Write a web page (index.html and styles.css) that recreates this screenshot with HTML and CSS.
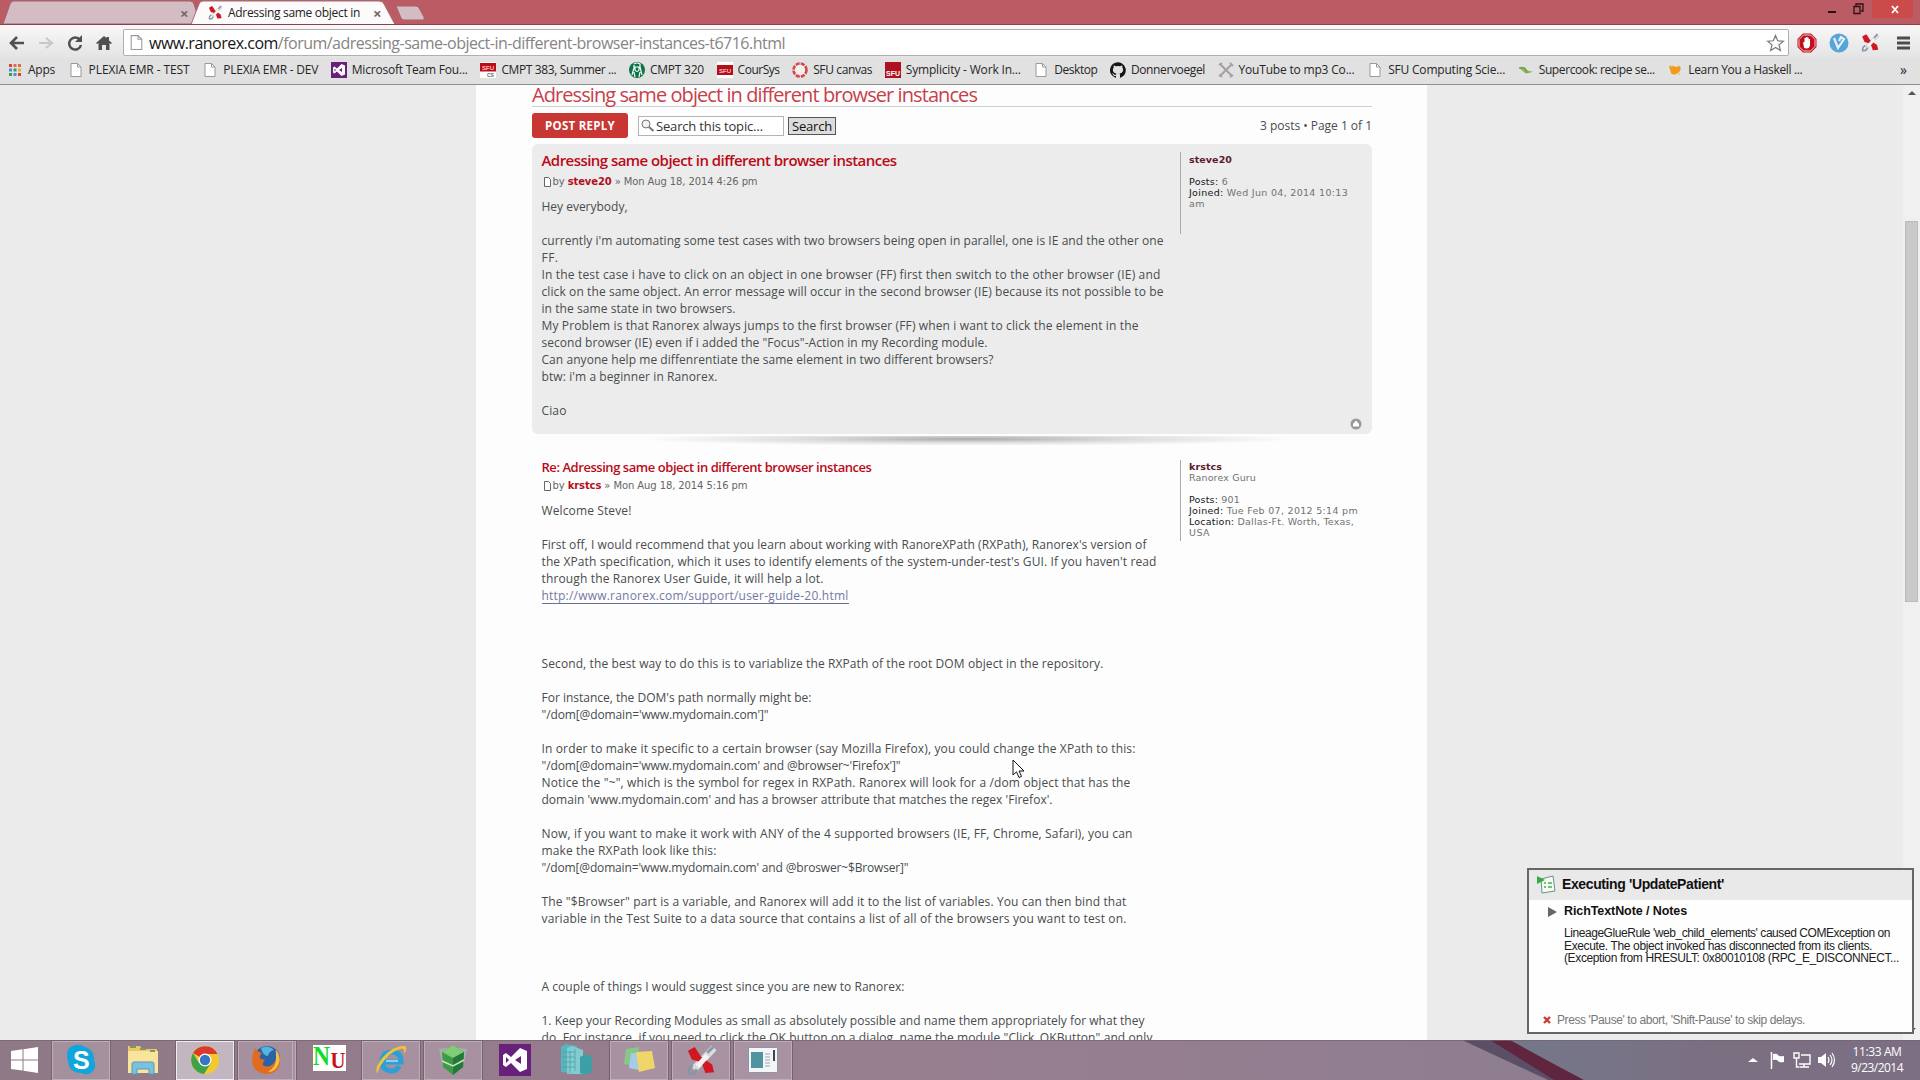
FILE: index.html
```html
<!DOCTYPE html>
<html lang="en">
<head>
<meta charset="utf-8">
<title>Adressing same object in different browser instances</title>
<link rel="stylesheet" href="styles.css">
</head>
<body>
<svg class="defs" width="0" height="0">
  <symbol id="page" viewBox="0 0 16 16"><path d="M3 1.5h6.5l3.5 3.5v9.500H3z" fill="#fff" stroke="#999"/><path d="M9.500 1.500V5H13" fill="none" stroke="#999"/></symbol>
  <symbol id="ranorex" viewBox="0 0 16 16"><path d="M14.500 1.500 4 12.500" stroke="#d9dcdf" stroke-width="3.600"/><path d="M3.500 10.500Q.8 12 1.500 14.800 4.500 15.500 5.500 12.500M11 4l3-3" fill="none" stroke="#8497a8" stroke-width="1.400"/><path d="M1 3 4.500 1l3.300 5L13.500 10l1 4-4.500.5-2-5.500L3 7.500z" fill="#d01820"/><path d="m6 11 5-5.500" stroke="#f4f4f4" stroke-width="2.600"/></symbol>
  <symbol id="vs" viewBox="0 0 32 32"><path fill="#68217a" d="M0 0h32v32H0z"/><path fill="#fff" fill-rule="evenodd" d="M21 4l7 3v18l-7 3-9-9-5 4-3-2V11l3-2 5 4zm1 8-6 4 6 4zM7 13v6l3-3z"/></symbol>
</svg>

<header class="browser">
  <div class="tabstrip">
    <svg class="tabshapes" width="440" height="24" viewBox="0 0 440 24"><path d="M3 24 10 4q1-3 4-3h176q3 0 4 3l6 20z" fill="#d4bcc4" stroke="#9d6470"/><path d="M191 24.500 199 4q1-3 4-3h176q4 0 5 3l11 20.500z" fill="#fcfafa" stroke="#a36e76"/><path d="M396 6h20q2 0 3 2l5 9q1 3-1 3h-19q-2 0-3-2z" fill="#d3bdc2" stroke="#a8606c"/></svg>
    <div class="tab first"><b class="x">×</b></div>
    <div class="tab second"><svg width="15" height="15"><use href="#ranorex"/></svg><span data-w="132">Adressing same object in</span><b class="x">×</b></div>
    <div class="winbtns"><svg width="100" height="20" viewBox="0 0 100 20"><path d="M52 0h41v18H52z" fill="#cb4b4b"/><path d="M8 12h8" stroke="#2a1216" stroke-width="2"/><path d="M34 6.500h6v7h-6zM36 6V4h7v7h-2" fill="none" stroke="#2a1216" stroke-width="1.300"/><path d="m72 6 6 7m0-7-6 7" stroke="#fff" stroke-width="1.800"/></svg></div>
  </div>
  <div class="toolbar">
    <div class="nav">
      <svg width="18" height="18" viewBox="0 0 18 18"><path d="M16 9H3m6-6L3 9l6 6" fill="none" stroke="#505050" stroke-width="2.600"/></svg>
      <svg width="18" height="18" viewBox="0 0 18 18"><path d="M2 9h13M9 4l6 5-6 5" fill="none" stroke="#c8c8c8" stroke-width="2"/></svg>
      <svg width="18" height="18" viewBox="0 0 18 18"><path d="M14 6A6 6 0 1 0 15 11" fill="none" stroke="#505050" stroke-width="2.500"/><path d="M16 1v7H9z" fill="#505050"/></svg>
      <svg width="18" height="18" viewBox="0 0 18 18"><path d="M1 9 9 2l2.500 2V3H14v3.500L17 9l-1 1-1.500-1v7H11v-5H7v5H3.500V9L2 10z" fill="#505050"/></svg>
    </div>
    <div class="omnibox">
      <svg width="17" height="17"><use href="#page"/></svg>
      <span class="url" data-w="636">www.ranorex.com<i>/forum/adressing-same-object-in-different-browser-instances-t6716.html</i></span>
      <svg class="star" width="19" height="18" viewBox="0 0 18 18"><path d="m9 1.500 2.200 5.300 5.600.4-4.300 3.700 1.400 5.500L9 13.400l-4.900 3 1.400-5.500L1.200 7.200l5.600-.4z" fill="#fff" stroke="#777" stroke-width="1.200"/></svg>
    </div>
    <div class="exts">
      <svg width="20" height="20" viewBox="0 0 20 20"><path d="M6 .5h8L19.500 6v8L14 19.500H6L.5 14V6z" fill="#c01020"/><path d="M6.500 2h7L18 6.500v7L13.500 18h-7L2 13.500v-7z" fill="none" stroke="#f3c9cc"/><path d="M6 9.500 7.500 9V5h1.300v3.500V4h1.400v4.500V4.500h1.400V9l.2-3h1.200v6q-.5 3.500-3.500 3.500T6.800 13z" fill="#fff"/></svg>
      <svg width="20" height="20" viewBox="0 0 20 20"><circle cx="10" cy="10" r="9.500" fill="#58a4d8"/><path d="m5 5 4 10 6-9-3-2-2 4" fill="none" stroke="#e5f2fa" stroke-width="2.200"/></svg>
      <svg width="19" height="19"><use href="#ranorex"/></svg>
      <svg class="menu" width="14" height="14" viewBox="0 0 14 14"><path d="M0 2h13M0 7h13M0 12h13" stroke="#4c4c4c" stroke-width="2.800"/></svg>
    </div>
  </div>
  <nav class="bookmarks">
    <a><svg width="16" height="16" viewBox="0 0 16 16"><path d="M2 2h3v3H2zM11 11h3v3h-3z" fill="#d84437"/><path d="M6.500 2h3v3h-3zM11 2h3v3h-3z" fill="#e06850"/><path d="M2 6.500h3v3H2zM6.500 11h3v3h-3z" fill="#4a8edb"/><path d="M6.500 6.500h3v3h-3zM2 11h3v3H2z" fill="#35a060"/><path d="M11 6.500h3v3h-3z" fill="#e8b020"/></svg><span data-w="27">Apps</span></a>
    <a><svg width="16" height="16"><use href="#page"/></svg><span data-w="101">PLEXIA EMR - TEST</span></a>
    <a><svg width="16" height="16"><use href="#page"/></svg><span data-w="95">PLEXIA EMR - DEV</span></a>
    <a><svg width="16" height="16"><use href="#vs"/></svg><span data-w="116">Microsoft Team Fou...</span></a>
    <a><svg width="16" height="16" viewBox="0 0 16 16"><path fill="#fff" d="M0 0h16v16H0z"/><path fill="#c00c18" d="M0 1h16v8.500H0z"/><text x="2" y="8" class="sfu">SFU</text><text x="7" y="14.500" class="cs">CS</text></svg><span data-w="115">CMPT 383, Summer ...</span></a>
    <a><svg width="16" height="16" viewBox="0 0 16 16"><circle cx="8" cy="8" r="8" fill="#0c7448"/><path d="M5 2q3-2 6 0v3l2 8M5 3v3l-2 7M6 5h4v3q-2 3-4 0zM5 10l1 5m5-5-1 5" fill="none" stroke="#fff" stroke-width="1.200"/></svg><span data-w="54">CMPT 320</span></a>
    <a><svg width="16" height="16" viewBox="0 0 16 16"><path fill="#fff" d="M0 0h16v16H0z"/><path fill="#b80c18" d="M0 3h16v10H0z"/><text x="2" y="11" class="sfu">SFU</text></svg><span data-w="42">CourSys</span></a>
    <a><svg width="16" height="16" viewBox="0 0 16 16"><circle cx="8" cy="8" r="6.500" fill="#f7eeee" stroke="#d44848" stroke-width="2.600" stroke-dasharray="4 1.100"/></svg><span data-w="59">SFU canvas</span></a>
    <a><svg width="16" height="16" viewBox="0 0 16 16"><path fill="#b01020" d="M0 0h16v16H0z"/><text x="1" y="14" class="sfu big">SFU</text></svg><span data-w="115">Symplicity - Work In...</span></a>
    <a><svg width="16" height="16"><use href="#page"/></svg><span data-w="43">Desktop</span></a>
    <a><svg width="16" height="16" viewBox="0 0 16 16"><path fill="#161616" d="M8 .2A8 8 0 0 0 5.500 15.800c.4.1.5-.2.500-.4v-1.500c-2.200.5-2.700-1-2.700-1-.4-.9-.9-1.200-.9-1.200-.7-.5.100-.5.100-.5.8.1 1.200.8 1.200.8.700 1.200 1.900.9 2.300.7.100-.5.300-.9.500-1.100-1.800-.2-3.600-.9-3.600-4 0-.9.300-1.600.8-2.100-.1-.2-.4-1 .1-2.100 0 0 .7-.2 2.200.8a7.600 7.600 0 0 1 4 0c1.500-1 2.200-.8 2.200-.8.400 1.100.2 1.900.1 2.100.5.600.8 1.300.8 2.100 0 3.100-1.900 3.800-3.700 4 .3.300.6.800.6 1.500v2.200c0 .2.100.5.600.4A8 8 0 0 0 8 .2z"/></svg><span data-w="74">Donnervoegel</span></a>
    <a><svg width="16" height="16" viewBox="0 0 16 16"><path d="m2 2 12 12M14 2 2 14M1 3l3-2m8 0 3 3M1 13l3 2m8 0 3-2" stroke="#a6a0a0" stroke-width="2" fill="none"/></svg><span data-w="116">YouTube to mp3 Co...</span></a>
    <a><svg width="16" height="16"><use href="#page"/></svg><span data-w="117">SFU Computing Scie...</span></a>
    <a><svg width="16" height="16" viewBox="0 0 16 16"><path d="M1 6q4-3 7 1 3 3 7 2-3 3-8 2" fill="#8fb860"/><path d="M1 6h6l2 5" fill="none" stroke="#6b8c48"/></svg><span data-w="116">Supercook: recipe se...</span></a>
    <a><svg width="16" height="16" viewBox="0 0 16 16"><path d="M2 4q5-1 6 1l5-1q2 4-2 7-5 3-7 0z" fill="#f39a1c"/><path d="m3 4 3 1m5 5 2 3" stroke="#d8c060"/></svg><span data-w="114">Learn You a Haskell ...</span></a>
    <span class="more">»</span>
  </nav>
</header>

<main class="viewport">
  <div class="sheet">
    <h1><span data-w="445">Adressing same object in different browser instances</span></h1>
    <div class="actions">
      <div class="reply"><span data-w="70">POST REPLY</span></div>
      <div class="searchbox"><svg width="15" height="15" viewBox="0 0 15 15"><circle cx="6" cy="6" r="4" fill="#eef2f4" stroke="#777"/><path d="m9 9 4.500 4" stroke="#777" stroke-width="2"/></svg><span data-w="107">Search this topic…</span></div>
      <div class="searchbtn"><span data-w="40">Search</span></div>
      <div class="pages"><span data-w="112">3 posts • Page 1 of 1</span></div>
    </div>
    <article class="post grey">
      <div class="body">
        <h2><span data-w="355">Adressing same object in different browser instances</span></h2>
        <div class="by"><svg width="9" height="11" viewBox="0 0 9 11"><path d="M1.500.5h4l2 2v7h-6z" fill="#fff" stroke="#666"/></svg><span data-w="205">by <b>steve20</b> » Mon Aug 18, 2014 4:26 pm</span></div>
        <div class="lines">
          <span data-w="86">Hey everybody,</span><br>
          <span data-w="622">currently i'm automating some test cases with two browsers being open in parallel, one is IE and the other one</span>
          <span data-w="17">FF.</span>
          <span data-w="619">In the test case i have to click on an object in one browser (FF) first then switch to the other browser (IE) and</span>
          <span data-w="622">click on the same object. An error message will occur in the second browser (IE) because its not possible to be</span>
          <span data-w="194">in the same state in two browsers.</span>
          <span data-w="597">My Problem is that Ranorex always jumps to the first browser (FF) when i want to click the element in the</span>
          <span data-w="446">second browser (IE) even if i added the "Focus"-Action in my Recording module.</span>
          <span data-w="452">Can anyone help me diffenrentiate the same element in two different browsers?</span>
          <span data-w="176">btw: i'm a beginner in Ranorex.</span><br>
          <span data-w="25">Ciao</span>
        </div>
      </div>
      <aside class="profile">
        <span class="user" data-w="43">steve20</span><br>
        <span data-w="39"><b>Posts:</b> 6</span>
        <span data-w="159"><b>Joined:</b> Wed Jun 04, 2014 10:13</span>
        <span data-w="16">am</span>
      </aside>
      <svg class="top" width="12" height="12" viewBox="0 0 12 12"><circle cx="6" cy="6" r="5.500" fill="#999"/><path d="m6 2.500 3 3.500v2.500H3V6z" fill="#fff"/></svg>
    </article>
    <div class="shade"></div>
    <article class="post reply2">
      <div class="body">
        <h2 class="small"><span data-w="330">Re: Adressing same object in different browser instances</span></h2>
        <div class="by"><svg width="9" height="11" viewBox="0 0 9 11"><path d="M1.500.5h4l2 2v7h-6z" fill="#fff" stroke="#666"/></svg><span data-w="195">by <b>krstcs</b> » Mon Aug 18, 2014 5:16 pm</span></div>
        <div class="lines">
          <span data-w="90">Welcome Steve!</span><br>
          <span data-w="605">First off, I would recommend that you learn about working with RanoreXPath (RXPath), Ranorex's version of</span>
          <span data-w="615">the XPath specification, which it uses to identify elements of the system-under-test's GUI. If you haven't read</span>
          <span data-w="282">through the Ranorex User Guide, it will help a lot.</span>
          <span class="link" data-w="307">http://www.ranorex.com/support/user-guide-20.html</span><br><br><br>
          <span data-w="562">Second, the best way to do this is to variablize the RXPath of the root DOM object in the repository.</span><br>
          <span data-w="270">For instance, the DOM's path normally might be:</span>
          <span data-w="227">"/dom[@domain='www.mydomain.com']"</span><br>
          <span data-w="594">In order to make it specific to a certain browser (say Mozilla Firefox), you could change the XPath to this:</span>
          <span data-w="359">"/dom[@domain='www.mydomain.com' and @browser~'Firefox']"</span>
          <span data-w="589">Notice the "~", which is the symbol for regex in RXPath. Ranorex will look for a /dom object that has the</span>
          <span data-w="511">domain 'www.mydomain.com' and has a browser attribute that matches the regex 'Firefox'.</span><br>
          <span data-w="591">Now, if you want to make it work with ANY of the 4 supported browsers (IE, FF, Chrome, Safari), you can</span>
          <span data-w="175">make the RXPath look like this:</span>
          <span data-w="367">"/dom[@domain='www.mydomain.com' and @broswer~$Browser]"</span><br>
          <span data-w="585">The "$Browser" part is a variable, and Ranorex will add it to the list of variables. You can then bind that</span>
          <span data-w="585">variable in the Test Suite to a data source that contains a list of all of the browsers you want to test on.</span><br><br><br>
          <span data-w="363">A couple of things I would suggest since you are new to Ranorex:</span><br>
          <span data-w="603">1. Keep your Recording Modules as small as absolutely possible and name them appropriately for what they</span>
          <span data-w="611">do. For instance, if you need to click the OK button on a dialog, name the module "Click_OKButton" and only</span>
        </div>
      </div>
      <aside class="profile">
        <span class="user" data-w="33">krstcs</span>
        <span data-w="67">Ranorex Guru</span><br>
        <span data-w="51"><b>Posts:</b> 901</span>
        <span data-w="169"><b>Joined:</b> Tue Feb 07, 2012 5:14 pm</span>
        <span data-w="165"><b>Location:</b> Dallas-Ft. Worth, Texas,</span>
        <span data-w="21">USA</span>
      </aside>
    </article>
  </div>
  <div class="scrollbar"><i class="up"></i><div class="thumb"></div><i class="down"></i></div>
</main>

<footer class="taskbar">
  <svg class="wall" width="1920" height="40" viewBox="0 0 1920 40"><defs><linearGradient id="wg"><stop offset="0" stop-color="#907987"/><stop offset=".45" stop-color="#987f90"/><stop offset=".78" stop-color="#8f7d90"/></linearGradient><linearGradient id="wr"><stop offset="0" stop-color="#74788a"/><stop offset=".5" stop-color="#7b6f82"/><stop offset="1" stop-color="#7d6f83"/></linearGradient></defs><path fill="url(#wg)" d="M0 0h1920v40H0z"/><path fill="url(#wr)" d="M1508 0h412v40h-336z"/><path fill="#5b4f68" d="M1462 0h40l68 40h-22z"/><path fill="#61263f" d="M1490 0h20l42 23 32 17h-30z"/><path d="M0 .5h1920" stroke="#75646f" opacity=".7"/></svg>
  <div class="start"><svg width="28" height="26" viewBox="0 0 28 26"><path fill="#fff" d="M0 4 11.500 2.300V12.500H0zM12.500 2.200 27 0v12.500H12.500zM0 13.500h11.500v10L0 22zM12.500 13.500H27V26l-14.500-2.200z"/></svg></div>
  <div class="task open"><svg width="32" height="32" viewBox="0 0 32 32"><path d="M10 1q6-1 10 2 10 3 9 13 4 10-5 14-4 1-8-1-12 0-13-12Q-1 4 10 1z" fill="#11a5de"/><text x="8" y="25" class="skype">S</text></svg></div>
  <div class="task"><svg width="34" height="32" viewBox="0 0 34 32"><path d="M2 2h12l2 3h15v24H2z" fill="#eac867"/><path d="M2 7h30v22H2z" fill="#f8e49b"/><path d="M4 3h6m4 2h6m4 2h5" stroke="#7a9a64" stroke-width="2"/><path d="M6 30V20q0-2 2-2h18q2 0 2 2v10h-5v-5H11v5z" fill="#7cc0dc" stroke="#4e9dc0"/></svg></div>
  <div class="task open active"><svg width="30" height="30" viewBox="0 0 30 30"><circle cx="15" cy="15" r="14" fill="#f5c92c"/><path d="M15 15 3 8A14 14 0 0 1 27.500 9H15z" fill="#d83a2c"/><path d="M3 8A14 14 0 0 0 14 29l7-11-6 3-6-3z" fill="#3fa14a"/><circle cx="15" cy="15" r="6.500" fill="#fff"/><circle cx="15" cy="15" r="5.200" fill="#3576c4"/></svg></div>
  <div class="task open stack"><svg width="30" height="30" viewBox="0 0 30 30"><circle cx="16" cy="14" r="13" fill="#2863a8"/><path d="M10 3q7-4 13 2-5 1-6 6-5 0-7-8z" fill="#56b5dc"/><path d="M3 6q0-2 1-3 2 4 7 5-4 4-1 6l4 1q-3 3-2 5 5 4 11-2 4-5 1-13 6 5 5 12-1 12-14 12Q2 28 1 16 1 10 3 6z" fill="#e06c22"/><path d="M25 5q5 6 3 13-3 9-11 9 8-5 8-13z" fill="#f5c04a"/></svg></div>
  <div class="task"><svg class="nu" width="33" height="26" viewBox="0 0 33 26"><path fill="#fff" d="M0 0h33v26H0z"/><text x="0" y="20" class="nu-n" textLength="17" lengthAdjust="spacingAndGlyphs">N</text><text x="17.500" y="23" class="nu-u" textLength="15" lengthAdjust="spacingAndGlyphs">U</text></svg></div>
  <div class="task open"><svg width="34" height="32" viewBox="0 0 34 32"><path d="M25 22q-2 5-8 5-9-1-9-10 1-9 10-9 9 0 9 10H9" fill="none" stroke="#2b9fd8" stroke-width="5"/><path d="M12 17h12" stroke="#80d6f4" stroke-width="2"/><path d="M4 30Q-1 26 9 13 20 1 31 2q3 2-1 8 1-7-4-5Q15 8 7 21q-4 6-3 9z" fill="#efc53b"/></svg></div>
  <div class="task open"><svg width="32" height="32" viewBox="0 0 32 32"><path d="M2 5q14-3 28 0l-3 14q-10 10-22 0z" fill="#a6bdb2" opacity=".7"/><path d="m16 1 11 7-1 15-10 8-10-8-1-15z" fill="#3d9a48"/><path d="m16 1 11 7-11 6L5 8z" fill="#82cc78"/><path d="m16 14 11-6-1 15-10 8z" fill="#257836"/><path d="m5 17 11 5 11-6" stroke="#c7e4c2" stroke-width="1.500" fill="none"/></svg></div>
  <div class="task"><svg width="32" height="32"><use href="#vs"/></svg></div>
  <div class="task"><svg width="34" height="32" viewBox="0 0 34 32"><path d="m1 3 5-3 11 2v27L1 28z" fill="#58b5bd"/><path d="m7 4 5-2 11 4v24H7z" fill="#80ccd0"/><path d="m20 13 6-3 6 3v15l-7 3-5-2z" fill="#3d9fa8"/><path d="M2 8h13M2 13h13M2 18h13M2 23h13m-5-16v22m5-24v22m6-12 10 2m-10 3 10 2m-10 3 10 2" stroke="#4a98a0" stroke-width=".7"/></svg></div>
  <div class="task open"><svg width="34" height="30" viewBox="0 0 34 30"><path d="m4 4 13-2-3 19-12-2z" fill="#86c887"/><path d="m9 8 15 1-3 17-14-3z" fill="#a5cbe8"/><path d="m14 7 16-1 3 17-16 4z" fill="#f0d568"/></svg></div>
  <div class="task open"><svg width="31" height="31"><use href="#ranorex"/></svg></div>
  <div class="task open"><svg width="30" height="26" viewBox="0 0 30 26"><path fill="#f3f5f7" stroke="#8a97a5" d="M.5.5h29v25H.5z"/><path fill="#4f94a0" d="M3 5h12v16H3z"/><path d="M17 7h5m-5 3h5m-5 3h5m-5 3h5m-5 3h5" stroke="#9aa7ae"/><path d="M26 3v11" stroke="#3c4850" stroke-width="2"/></svg></div>
  <div class="tray">
    <svg width="92" height="20" viewBox="0 0 92 20"><path d="m2 12 5-4 5 4z" fill="#fff"/><path d="M25.500 2v17" stroke="#fff" stroke-width="1.500"/><path d="M27 4q4-1 5 1t6 1v6q-5 1-6-1t-5-1z" fill="#fff"/><path d="M55 5h9v9H53M58 14v3m-4 0h9M48 3h5v5h-5zM50.500 8v9h3" fill="none" stroke="#fff" stroke-width="1.400"/><path d="M72 7h3l5-4v14l-5-4h-3z" fill="#fff"/><path d="M82 7q2 3 0 6m2-8q4 5 0 10m2-12q5 7 0 14" fill="none" stroke="#fff" stroke-width="1.200"/></svg>
    <div class="clock"><span data-w="49">11:33 AM</span><span data-w="52">9/23/2014</span></div>
  </div>
</footer>

<section class="popup">
  <div class="pophead"><svg width="19" height="19" viewBox="0 0 19 19"><path d="M4 4 16 1l2 15-13 2z" fill="#f3faf3" stroke="#6c9480"/><path d="M7 8h2m2 0h4M7 12h2m2 0h4" stroke="#4ab04e" stroke-width="1.500"/><path d="m0 1 8 4-8 4z" fill="#35ac43"/></svg><span data-w="162">Executing 'UpdatePatient'</span></div>
  <div class="poprow"><svg width="11" height="10" viewBox="0 0 11 10"><path d="m1 0 9 5-9 5z" fill="#666"/></svg><span data-w="123">RichTextNote / Notes</span></div>
  <div class="poptext">
    <span data-w="326">LineageGlueRule 'web_child_elements' caused COMException on</span>
    <span data-w="308">Execute. The object invoked has disconnected from its clients.</span>
    <span data-w="335">(Exception from HRESULT: 0x80010108 (RPC_E_DISCONNECT...</span>
  </div>
  <div class="popfoot"><svg width="8" height="8" viewBox="0 0 8 8"><path d="m1 1 6 6m0-6L1 7" stroke="#cf3b34" stroke-width="2.400"/></svg><span data-w="248">Press 'Pause' to abort, 'Shift-Pause' to skip delays.</span></div>
</section>

<svg class="cursor" width="13" height="20" viewBox="0 0 13 20"><path d="M1 1v15l3.500-3.200L7 18.500l2.500-1.100-2.400-5.400H12z" fill="#fff" stroke="#111"/></svg>
<script src="fit.js"></script>
</body>
</html>
```
FILE: styles.css
```css
* { box-sizing: border-box; }
body { margin: 0; width: 1920px; height: 1080px; overflow: hidden; display: flex; flex-direction: column; font-family: "Open Sans", "Noto Sans", sans-serif; color: #484c4e; }
svg { display: block; flex: none; }
.defs { position: absolute; }
[data-w] { display: block; width: max-content; white-space: nowrap; flex: none; }
i { font-style: normal; }

.browser { height: 85px; flex: none; display: flex; flex-direction: column; background: #e1e1e1; border-bottom: 1px solid #8f8f8f; }
.tabstrip { height: 24px; display: flex; position: relative; background: #bb5c65; font-size: 12px; color: #222; }
.tabshapes { position: absolute; left: 0; top: 0; }
.tab { display: flex; align-items: center; position: relative; padding-top: 1px; }
.first { width: 193px; justify-content: flex-end; padding-right: 4px; }
.second { width: 202px; padding-left: 15px; gap: 5px; }
.x { font-size: 15px; color: #75676b; width: 9px; line-height: 16px; }
.second .x { margin-left: 8px; }
.winbtns { margin-left: auto; width: 100px; }
.toolbar { height: 34px; display: flex; align-items: center; padding-top: 2px; background: linear-gradient(#f9f7f7, #e4e4e4); border-top: 1px solid #86434c; }
.nav { width: 123px; padding-left: 8px; display: flex; gap: 11px; }
.omnibox { width: 1666px; height: 27px; display: flex; align-items: center; background: #fff; border: 1px solid #b5aeae; border-radius: 2px; padding-left: 4px; }
.url { font-size: 16px; color: #161616; margin-left: 4px; }
.url i { color: #858585; }
.star { margin-left: auto; margin-right: 3px; }
.exts { display: flex; align-items: center; gap: 12px; padding-left: 8px; }
.menu { margin-left: 5px; }
.bookmarks { height: 26px; display: flex; align-items: center; gap: 12.6px; padding: 0 13px 3px 7px; font-size: 12px; color: #262626; }
.bookmarks a { display: flex; align-items: center; gap: 5px; }
.more { margin-left: auto; font-size: 14px; }
.sfu { font: 6px "Liberation Sans", sans-serif; fill: #fff; }
.big { font-size: 7px; font-weight: bold; }
.cs { font: bold 5px "Liberation Sans", sans-serif; fill: #666; }

.viewport { height: 955px; flex: none; overflow: hidden; display: flex; background: #ebebeb; }
.sheet { width: 951px; height: 955px; margin-left: 476px; padding: 0 55px 0 56px; background: #fdfdfd; overflow: hidden; }
h1 { margin: 0; height: 22px; font: 20px/20px "Open Sans", sans-serif; color: #c83f4c; border-bottom: 1px solid #cdd1d1; }
.actions { height: 37px; display: flex; align-items: center; font-size: 13px; }
.reply { width: 96px; height: 25px; display: flex; align-items: center; justify-content: center; background: #c93734; border-radius: 3px; color: #fff; font-weight: bold; font-size: 11.500px; padding-bottom: 1px; }
.searchbox { width: 146px; height: 20px; margin-left: 10px; display: flex; align-items: center; gap: 1px; border: 1px solid #b4b4b4; background: #fff; padding-left: 1px; color: #333; }
.searchbtn { width: 48px; height: 18px; margin-left: 4px; display: flex; align-items: center; justify-content: center; background: #dcdcdc; border: 1px solid #555; color: #111; }
.pages { margin-left: auto; font-size: 12px; padding-bottom: 1px; }
.post { display: flex; padding: 8px 0 0 9.500px; }
.grey { position: relative; height: 290px; background: #ececec; border-radius: 6px; }
.body { width: 638.5px; flex: none; }
h2 { margin: -1px 0 0; height: 18px; font: 600 15px/18px "Open Sans", sans-serif; color: #bb0a18; }
h2.small { font-size: 13px; height: 14px; line-height: 14px; margin-top: 0; }
.by { height: 14px; margin-top: 6px; padding-left: 1px; display: flex; align-items: center; gap: 1px; font: 10px/14px "DejaVu Sans", sans-serif; color: #666; }
.reply2 .by { margin-top: 5px; }
.by b { color: #b0101c; }
.lines { margin-top: 9px; font-size: 12px; line-height: 17px; }
.link { color: #7479a4; border-bottom: 1px solid #6a6f9c; height: 17px; }
.profile { height: 82px; border-left: 1px solid #aaa; padding: 2px 0 0 8px; font: 9.500px/11px "DejaVu Sans", sans-serif; color: #727272; }
.profile b { font-weight: normal; color: #151515; }
.profile .user { font-weight: bold; color: #5c1a2c; }
.top { position: absolute; right: 10px; bottom: 4px; }
.shade { height: 26px; background: radial-gradient(ellipse 330px 7px at 436px 3px, #aaa, #ddd 50%, transparent) no-repeat 0 2px / 100% 9px; }
.reply2 { padding-top: 0; }
.reply2 .profile { height: 81px; padding-top: 1px; }
.scrollbar { margin-left: auto; width: 17px; height: 955px; display: flex; flex-direction: column; align-items: center; background: #f0f0f0; }
.up, .down { width: 0; height: 0; border: 4px solid transparent; }
.up { border-bottom-color: #555; margin: 2px 0 126px; }
.down { border-top-color: #555; margin: auto 0 4px; }
.thumb { width: 13px; height: 381px; background: #c9c9c9; border: 1px solid #bbb; }

.taskbar { height: 40px; flex: none; display: flex; gap: 4px; position: relative; align-items: center; }
.wall { position: absolute; left: 0; top: 0; }
.start { width: 48px; padding-left: 11px; position: relative; }
.task { width: 58px; height: 39px; display: flex; align-items: center; justify-content: center; position: relative; }
.open { background: rgba(190, 170, 185, .45); border: 1px solid #bdadb8; outline: 1px solid #75636f; outline-offset: 0; }
.active { background: #c2b6c0; border-color: #f1ecef; }
.stack { border-right: 4px double #bdadb8; }
.nu { margin-bottom: 5px; }
.skype { font: bold 25px "Liberation Sans", sans-serif; fill: #fff; }
.nu-n { font: bold 28px "Liberation Serif", serif; fill: #10dc28; }
.nu-u { font: bold 23px "Liberation Serif", serif; fill: #cc1018; }
.tray { margin-left: auto; margin-right: 16px; display: flex; align-items: center; gap: 12px; position: relative; }
.clock { width: 54px; display: flex; flex-direction: column; align-items: center; font-size: 12px; line-height: 16px; color: #fff; }

.popup { position: absolute; left: 1527px; top: 868px; width: 387px; height: 166px; border: 2px solid #666; background: #fefefe; color: #222; font: 12px/12.500px "Liberation Sans", sans-serif; }
.pophead { height: 30px; display: flex; align-items: center; gap: 6px; padding: 0 0 2px 8px; background: #e9e9e9; font-weight: bold; font-size: 14px; color: #111; }
.poprow { height: 23px; display: flex; align-items: center; gap: 6px; padding-left: 18px; font-weight: bold; font-size: 12.500px; color: #111; }
.poptext { height: 86px; padding: 4px 0 0 35px; }
.popfoot { display: flex; align-items: center; gap: 6px; padding-left: 14px; margin-top: 5px; color: #777; }
.cursor { position: absolute; left: 1012px; top: 759px; }
```
FILE: fit.js
```js
// Spread each line's letters so that it takes its set width.
document.querySelectorAll('[data-w]').forEach(function (el) {
  var target = parseFloat(el.dataset.w);
  var count = el.textContent.length;
  el.style.letterSpacing = ((target - el.getBoundingClientRect().width) / count) + 'px';
});
```
